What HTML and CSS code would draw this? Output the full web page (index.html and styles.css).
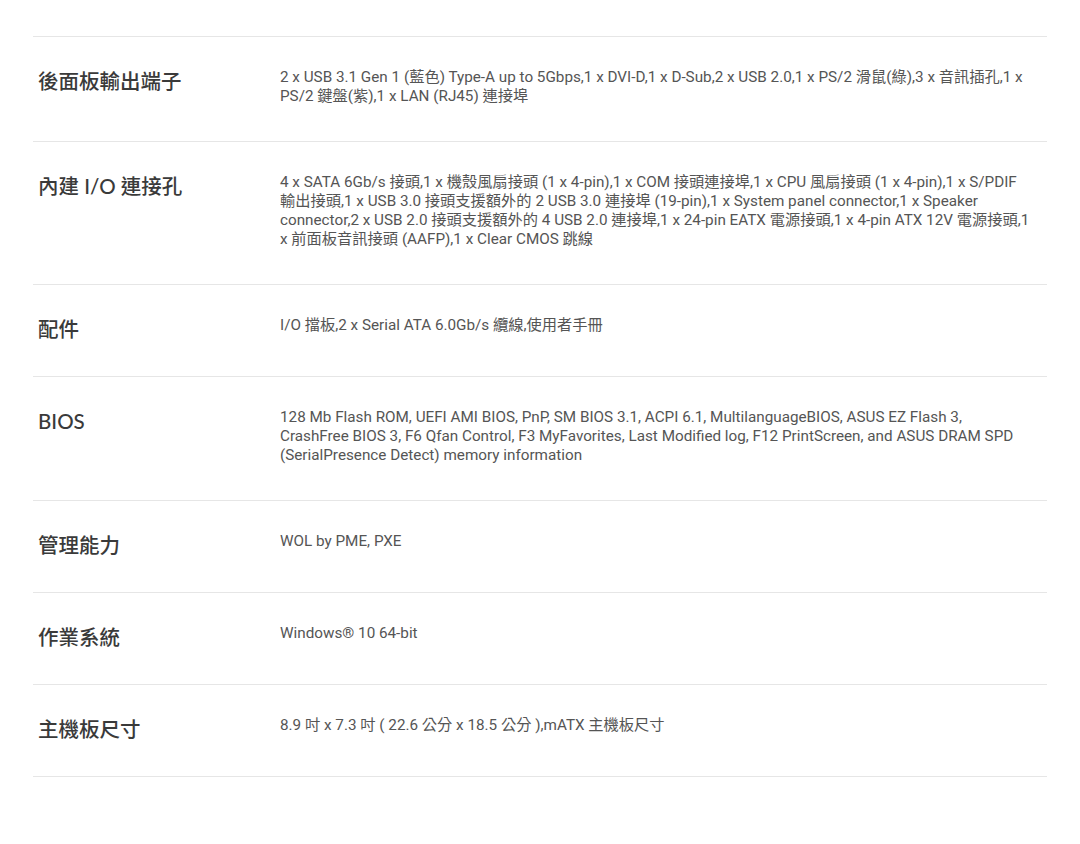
FILE: index.html
```html
<!DOCTYPE html>
<html lang="zh-Hant">
<head>
    <meta charset="UTF-8">
    <meta name="viewport" content="width=device-width, initial-scale=1.0">
    <title>技術規格</title>
    <link rel="stylesheet" href="styles.css">
</head>
<body>
    <div class="spec-list">
        <!-- 規格列表 -->
        <div class="spec-row">
            <div class="spec-label">後面板輸出端子</div>
            <div class="spec-value">2 x USB 3.1 Gen 1 (藍色) Type-A up to 5Gbps,1 x DVI-D,1 x D-Sub,2 x USB 2.0,1 x PS/2 滑鼠(綠),3 x 音訊插孔,1 x PS/2 鍵盤(紫),1 x LAN (RJ45) 連接埠</div>
        </div>
        <div class="spec-row">
            <div class="spec-label">內建 I/O 連接孔</div>
            <div class="spec-value">4 x SATA 6Gb/s 接頭,1 x 機殼風扇接頭 (1 x 4-pin),1 x COM 接頭連接埠,1 x CPU 風扇接頭 (1 x 4-pin),1 x S/PDIF 輸出接頭,1 x USB 3.0 接頭支援額外的 2 USB 3.0 連接埠 (19-pin),1 x System panel connector,1 x Speaker connector,2 x USB 2.0 接頭支援額外的 4 USB 2.0 連接埠,1 x 24-pin EATX 電源接頭,1 x 4-pin ATX 12V 電源接頭,1 x 前面板音訊接頭 (AAFP),1 x Clear CMOS 跳線</div>
        </div>
        <div class="spec-row">
            <div class="spec-label">配件</div>
            <div class="spec-value">I/O 擋板,2 x Serial ATA 6.0Gb/s 纜線,使用者手冊</div>
        </div>
        <div class="spec-row">
            <div class="spec-label">BIOS</div>
            <div class="spec-value">128 Mb Flash ROM, UEFI AMI BIOS, PnP, SM BIOS 3.1, ACPI 6.1, MultilanguageBIOS, ASUS EZ Flash 3, CrashFree BIOS 3, F6 Qfan Control, F3 MyFavorites, Last Modified log, F12 PrintScreen, and ASUS DRAM SPD (SerialPresence Detect) memory information</div>
        </div>
        <div class="spec-row">
            <div class="spec-label">管理能力</div>
            <div class="spec-value">WOL by PME, PXE</div>
        </div>
        <div class="spec-row">
            <div class="spec-label">作業系統</div>
            <div class="spec-value">Windows® 10 64-bit</div>
        </div>
        <div class="spec-row">
            <div class="spec-label">主機板尺寸</div>
            <div class="spec-value">8.9 吋 x 7.3 吋 ( 22.6 公分 x 18.5 公分 ),mATX 主機板尺寸</div>
        </div>
    </div>
</body>
</html>
```

FILE: styles.css
```css
body {
    margin: 0;
    background-color: #ffffff;
    font-family: Roboto, "Noto Sans CJK TC", sans-serif;
    color: #333333;
}

.spec-list {
    padding: 36px 33px 0 33px;
}

.spec-row {
    display: grid;
    grid-template-columns: 247px 1fr;
    padding: 31px 15px 34px 0;
    border-top: 1px solid #e6e6e6;
}

.spec-row:last-child {
    border-bottom: 1px solid #e6e6e6;
}

.spec-label {
    padding-left: 5px;
    font-family: Lato, "Noto Sans CJK TC", sans-serif;
    font-size: 20.5px;
    font-weight: 500;
    line-height: 26px;
    color: #3a3a3a;
}

.spec-value {
    font-size: 15.25px;
    line-height: 19.3px;
    color: #555555;
}
```
